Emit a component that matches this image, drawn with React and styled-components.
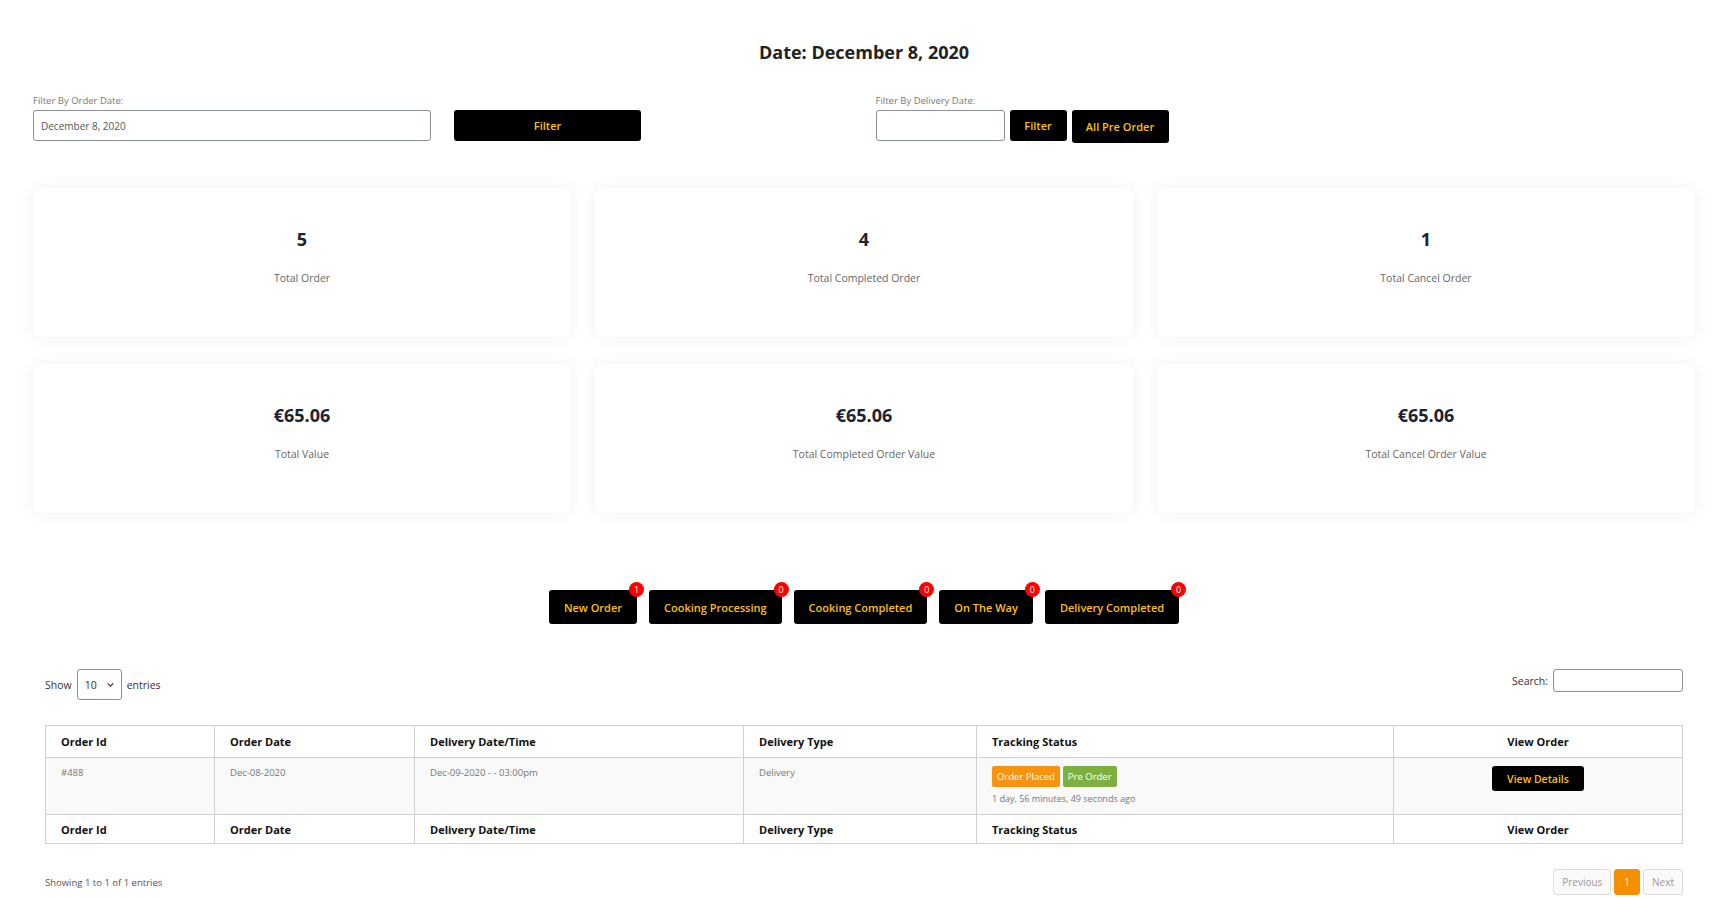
import React from 'react'
import styled, { createGlobalStyle } from 'styled-components'

const GlobalStyle = createGlobalStyle`
  body {
    margin: 0;
    background: #fff;
    font-family: "Open Sans", "Liberation Sans", sans-serif;
    color: #212529;
  }
`

const Page = styled.div`
  padding: 40px 30px 0 33px;
`

const Title = styled.h2`
  margin: 0 0 30px;
  text-align: center;
  font-size: 18px;
  font-weight: 700;
  color: #222;
`

const FilterRow = styled.div`
  display: flex;
`

const FilterGroup = styled.div`
  flex: 1;
  padding-left: ${(p) => p.$pad || 0}px;
`

const Label = styled.div`
  font-size: 9.5px;
  color: #777;
  margin-bottom: 3px;
`

const Controls = styled.div`
  display: flex;
  gap: ${(p) => p.$gap}px;
  align-items: flex-start;
`

const DateInput = styled.div`
  box-sizing: border-box;
  width: ${(p) => p.$w}px;
  height: 31px;
  border: 1px solid #8a9097;
  border-radius: 3px;
  padding: 0 7px;
  display: flex;
  align-items: center;
  font-size: 10px;
  color: #555;
`

const BlackButton = styled.button`
  box-sizing: border-box;
  width: ${(p) => (p.$w ? `${p.$w}px` : 'auto')};
  height: ${(p) => p.$h || 31}px;
  padding: 0 ${(p) => p.$px || 14}px;
  background: #000;
  color: #ffc107;
  border: none;
  border-radius: 3px;
  font-family: "Open Sans", sans-serif;
  font-size: ${(p) => p.$fs || 11}px;
  font-weight: 600;
  cursor: pointer;
  position: relative;
`

const StatGrid = styled.div`
  display: grid;
  grid-template-columns: repeat(3, 1fr);
  column-gap: 24px;
  row-gap: 27px;
  margin-top: 45px;
`

const StatCard = styled.div`
  height: 149px;
  background: #fff;
  border-radius: 7px;
  box-shadow: 0 0 18px rgba(0, 0, 0, 0.06);
  display: flex;
  flex-direction: column;
  align-items: center;
  padding-top: 39px;
  box-sizing: border-box;
`

const StatValue = styled.div`
  font-size: 18px;
  font-weight: 700;
  color: #1d2330;
  line-height: 24px;
`

const StatLabel = styled.div`
  margin-top: 20px;
  font-size: 10.5px;
  color: #666;
`

const StatusBar = styled.div`
  display: flex;
  justify-content: center;
  gap: 12px;
  margin-top: 77px;
`

const Badge = styled.span`
  position: absolute;
  top: -8px;
  right: -7px;
  width: 15px;
  height: 15px;
  border-radius: 50%;
  background: #ff0000;
  color: #fff;
  font-size: 9px;
  font-weight: 400;
  line-height: 15px;
  text-align: center;
`

const TableSection = styled.div`
  padding: 0 12px;
  margin-top: 45px;
`

const TableTop = styled.div`
  display: flex;
  justify-content: space-between;
  align-items: flex-start;
  font-size: 10.5px;
  color: #333;
`

const LengthControl = styled.label`
  display: flex;
  align-items: center;
  gap: 5px;
`

const Select = styled.div`
  box-sizing: border-box;
  width: 45px;
  height: 31px;
  border: 1px solid #8a9097;
  border-radius: 3px;
  display: flex;
  align-items: center;
  justify-content: space-between;
  padding: 0 6px 0 7px;
  font-size: 10.5px;
`

const SearchBox = styled.div`
  box-sizing: border-box;
  width: 130px;
  height: 23px;
  border: 1px solid #8a9097;
  border-radius: 3px;
`

const SearchControl = styled.label`
  display: flex;
  align-items: center;
  gap: 5px;
`

const Table = styled.table`
  width: 100%;
  margin-top: 25px;
  border-collapse: collapse;
  table-layout: fixed;
  border: 1px solid #d0d0d0;
`

const Th = styled.th`
  height: ${(p) => p.$h || 31}px;
  border: 1px solid #d0d0d0;
  padding: 0 15px;
  text-align: ${(p) => p.$align || 'left'};
  font-size: 11px;
  font-weight: 700;
  color: #111;
`

const Td = styled.td`
  height: 57px;
  border: 1px solid #d0d0d0;
  background: #f9f9f9;
  padding: 8px 15px 0;
  vertical-align: top;
  text-align: ${(p) => p.$align || 'left'};
  font-size: 9.5px;
  color: #777;
  box-sizing: border-box;
`

const Tag = styled.span`
  display: inline-block;
  padding: 4px 5px;
  margin-right: 3px;
  border-radius: 2px;
  background: ${(p) => p.$bg};
  color: #fff;
  font-size: 9.5px;
`

const Ago = styled.div`
  margin-top: 5px;
  font-size: 9px;
  color: #777;
`

const TableFoot = styled.div`
  display: flex;
  justify-content: space-between;
  align-items: center;
  margin-top: 25px;
  font-size: 9.5px;
  color: #555;
`

const Pager = styled.div`
  display: flex;
  gap: 3px;
`

const PageBtn = styled.span`
  box-sizing: border-box;
  height: 26px;
  padding: 0 ${(p) => (p.$active ? 9 : 8)}px;
  display: flex;
  align-items: center;
  border: 1px solid ${(p) => (p.$active ? '#f79000' : '#ddd')};
  border-radius: 3px;
  background: ${(p) => (p.$active ? '#f79000' : '#fbf9f9')};
  color: ${(p) => (p.$active ? '#fff' : '#999')};
  font-size: 10px;
`

const cards = [
  ['5', 'Total Order'],
  ['4', 'Total Completed Order'],
  ['1', 'Total Cancel Order'],
  ['€65.06', 'Total Value'],
  ['€65.06', 'Total Completed Order Value'],
  ['€65.06', 'Total Cancel Order Value'],
]

const statuses = [
  ['New Order', 1],
  ['Cooking Processing', 0],
  ['Cooking Completed', 0],
  ['On The Way', 0],
  ['Delivery Completed', 0],
]

const columns = [
  ['Order Id', 169],
  ['Order Date', 200],
  ['Delivery Date/Time', 329],
  ['Delivery Type', 233],
  ['Tracking Status', 417],
  ['View Order', 289, 'center'],
]

const HeadRow = ({ h }) => (
  <tr>
    {columns.map(([t, w, a]) => (
      <Th key={t} $align={a} $h={h}>{t}</Th>
    ))}
  </tr>
)

export default function App() {
  return (
    <>
      <GlobalStyle />
      <Page>
        <Title>Date: December 8, 2020</Title>

        <FilterRow>
          <FilterGroup>
            <Label>Filter By Order Date:</Label>
            <Controls $gap={23}>
              <DateInput $w={398}>December 8, 2020</DateInput>
              <BlackButton $w={187}>Filter</BlackButton>
            </Controls>
          </FilterGroup>
          <FilterGroup $pad={23}>
            <Label>Filter By Delivery Date:</Label>
            <Controls $gap={5}>
              <DateInput $w={129} />
              <BlackButton $w={57}>Filter</BlackButton>
              <BlackButton $w={97} $h={33}>All Pre Order</BlackButton>
            </Controls>
          </FilterGroup>
        </FilterRow>

        <StatGrid>
          {cards.map(([v, l]) => (
            <StatCard key={l}>
              <StatValue>{v}</StatValue>
              <StatLabel>{l}</StatLabel>
            </StatCard>
          ))}
        </StatGrid>

        <StatusBar>
          {statuses.map(([t, n]) => (
            <BlackButton key={t} $h={34} $px={15}>
              {t}
              <Badge>{n}</Badge>
            </BlackButton>
          ))}
        </StatusBar>

        <TableSection>
          <TableTop>
            <LengthControl>
              Show
              <Select>
                10
                <svg width="9" height="9" viewBox="0 0 16 16">
                  <path d="M3 6l5 5 5-5" fill="none" stroke="#333" strokeWidth="2" />
                </svg>
              </Select>
              entries
            </LengthControl>
            <SearchControl>
              Search:
              <SearchBox />
            </SearchControl>
          </TableTop>

          <Table>
            <colgroup>
              {columns.map(([t, w]) => (
                <col key={t} style={{ width: w }} />
              ))}
            </colgroup>
            <thead>
              <HeadRow />
            </thead>
            <tbody>
              <tr>
                <Td>#488</Td>
                <Td>Dec-08-2020</Td>
                <Td>Dec-09-2020 - - 03:00pm</Td>
                <Td>Delivery</Td>
                <Td>
                  <Tag $bg="#f7930e">Order Placed</Tag>
                  <Tag $bg="#7db03f">Pre Order</Tag>
                  <Ago>1 day, 56 minutes, 49 seconds ago</Ago>
                </Td>
                <Td $align="center">
                  <BlackButton $h={25} $px={15} $fs={10.5}>View Details</BlackButton>
                </Td>
              </tr>
            </tbody>
            <tfoot>
              <HeadRow h={28} />
            </tfoot>
          </Table>

          <TableFoot>
            <span>Showing 1 to 1 of 1 entries</span>
            <Pager>
              <PageBtn>Previous</PageBtn>
              <PageBtn $active>1</PageBtn>
              <PageBtn>Next</PageBtn>
            </Pager>
          </TableFoot>
        </TableSection>
      </Page>
    </>
  )
}
